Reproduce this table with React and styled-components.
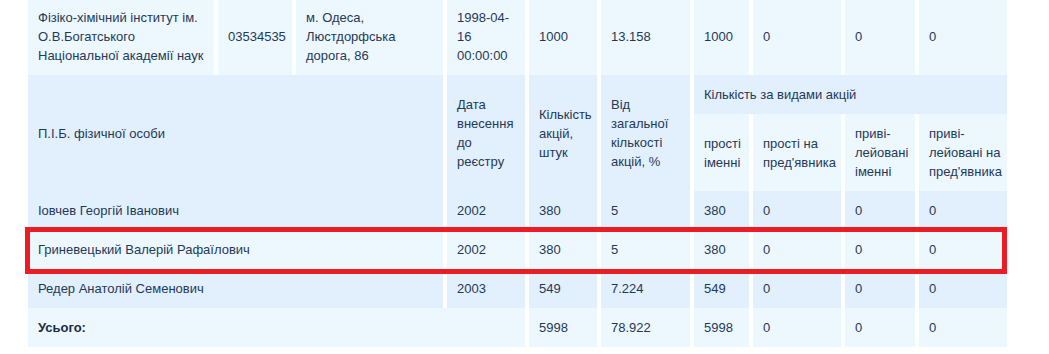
import React from "react";
import styled, { createGlobalStyle } from "styled-components";

const GlobalStyle = createGlobalStyle`
  body {
    margin: 0;
    background: #ffffff;
    font-family: "Liberation Sans", Arial, sans-serif;
  }
`;

const Wrap = styled.div`
  position: relative;
  padding-left: 24px;
`;

const Table = styled.table`
  margin-top: -2px;
  width: 987px;
  table-layout: fixed;
  border-collapse: separate;
  border-spacing: 4px 0;
  font-size: 13px;
  line-height: 19px;
  color: #1f3a58;
`;

const Col = styled.col`
  width: ${({ $w }) => $w}px;
`;

const Row = styled.tr`
  background: ${({ $tone }) => ($tone === "dark" ? "#e2effd" : "#edf7fe")};
`;

const Cell = styled.td`
  box-sizing: border-box;
  padding: 10px;
  vertical-align: middle;
  text-align: left;
  font-weight: ${({ $bold }) => ($bold ? 700 : 400)};
  color: ${({ $bold }) => ($bold ? "#1a2c42" : "inherit")};
`;

const HeadCell = styled.th`
  box-sizing: border-box;
  padding: 10px ${({ $tight }) => ($tight ? "4px" : "10px")} 10px 10px;
  vertical-align: middle;
  text-align: left;
  font-weight: 400;
`;

// red annotation frame drawn over the highlighted shareholder row
const Highlight = styled.div`
  position: absolute;
  left: 25px;
  top: 229px;
  width: 982px;
  height: 47px;
  box-sizing: border-box;
  border: 5px solid #ec1c24;
  pointer-events: none;
`;

const widths = [186, 74, 147, 78, 68, 89, 55, 88, 70, 88];

const holders = [
  { name: "Іовчев Георгій Іванович", date: "2002", qty: "380", pct: "5", simple: "380" },
  { name: "Гриневецький Валерій Рафаїлович", date: "2002", qty: "380", pct: "5", simple: "380" },
  { name: "Редер Анатолій Семенович", date: "2003", qty: "549", pct: "7.224", simple: "549" },
];

const App = () => {
  return (
    <>
      <GlobalStyle />
      <Wrap>
        <Table>
          <colgroup>
            {widths.map((w, i) => (
              <Col key={i} $w={w} />
            ))}
          </colgroup>
          <tbody>
            <Row $tone="light">
              <Cell>Фізіко-хімічний інститут ім. О.В.Богатського Національної академії наук</Cell>
              <Cell>03534535</Cell>
              <Cell>м. Одеса, Люстдорфська дорога, 86</Cell>
              <Cell>
                1998-04-<wbr />16 00:00:00
              </Cell>
              <Cell>1000</Cell>
              <Cell>13.158</Cell>
              <Cell>1000</Cell>
              <Cell>0</Cell>
              <Cell>0</Cell>
              <Cell>0</Cell>
            </Row>
            <Row $tone="dark">
              <HeadCell colSpan={3} rowSpan={2}>
                П.І.Б. фізичної особи
              </HeadCell>
              <HeadCell rowSpan={2}>Дата внесення до реєстру</HeadCell>
              <HeadCell rowSpan={2}>Кількість акцій, штук</HeadCell>
              <HeadCell rowSpan={2}>Від загальної кількості акцій, %</HeadCell>
              <HeadCell colSpan={4}>Кількість за видами акцій</HeadCell>
            </Row>
            <Row $tone="light">
              <HeadCell>прості іменні</HeadCell>
              <HeadCell>прості на пред'явника</HeadCell>
              <HeadCell>приві-лейовані іменні</HeadCell>
              <HeadCell $tight>{"приві-лейовані\u00a0на пред'явника"}</HeadCell>
            </Row>
            {holders.map((h, i) => (
              <Row key={h.name} $tone={i % 2 === 0 ? "dark" : "light"}>
                <Cell colSpan={3}>{h.name}</Cell>
                <Cell>{h.date}</Cell>
                <Cell>{h.qty}</Cell>
                <Cell>{h.pct}</Cell>
                <Cell>{h.simple}</Cell>
                <Cell>0</Cell>
                <Cell>0</Cell>
                <Cell>0</Cell>
              </Row>
            ))}
            <Row $tone="light">
              <Cell colSpan={4} $bold>
                Усього:
              </Cell>
              <Cell>5998</Cell>
              <Cell>78.922</Cell>
              <Cell>5998</Cell>
              <Cell>0</Cell>
              <Cell>0</Cell>
              <Cell>0</Cell>
            </Row>
          </tbody>
        </Table>
        <Highlight />
      </Wrap>
    </>
  );
};

export default App;
